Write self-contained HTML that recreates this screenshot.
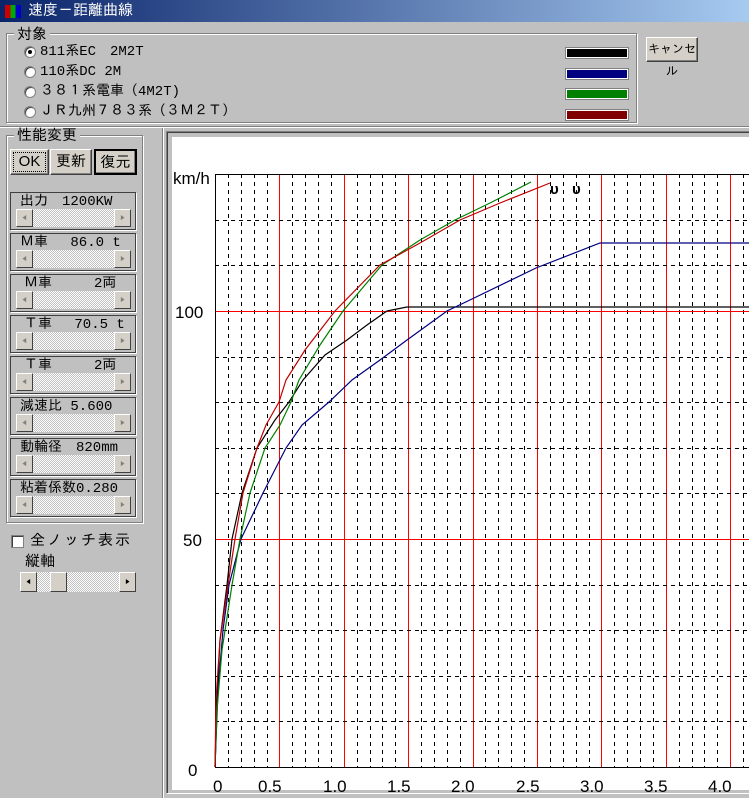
<!DOCTYPE html>
<html><head><meta charset="utf-8"><style>
*{margin:0;padding:0;box-sizing:border-box}
body{width:749px;height:798px;background:#c0c0c0;position:relative;overflow:hidden;font-family:"Liberation Sans","IPAGothic","Noto Sans CJK JP",sans-serif;font-size:13px;color:#000}
.a{position:absolute}
.title{left:0;top:0;width:749px;height:22px;background:linear-gradient(90deg,#0a246a,#a6caf0);color:#fff;font-size:15px;line-height:22px;padding-left:28px}
.grp{border:1px solid #808080;box-shadow:1px 1px 0 #fff inset,1px 1px 0 #fff}
.gl{background:#c0c0c0;padding:0 3px;font-size:15px;line-height:15px}
.btn{background:#d4d0c8;border:1px solid;border-color:#fff #404040 #404040 #fff;box-shadow:inset -1px -1px 0 #808080;text-align:center;font-size:15px}
.sw{width:62px;height:10px;border:1px solid #fff;outline:1px solid #808080}
.rad{width:12px;height:12px;border-radius:50%;background:#fff;border:1px solid #808080;box-shadow:inset 1px 1px 0 #404040}
.rt{font-size:14px;font-family:"Liberation Mono","IPAGothic",monospace}
.sb{width:115px;height:18px;background:repeating-conic-gradient(#fff 0 25%,#c0c0c0 0 50%) 0 0/2px 2px}
.sb .ar{position:absolute;top:0;width:17px;height:18px;background:#d4d0c8;border:1px solid;border-color:#fff #404040 #404040 #fff;color:#808080;font-size:9px;line-height:16px;text-align:center}
.box{border:1px solid #404040;box-shadow:1px 1px 0 #fff}
</style></head><body>
<div class="a title">速度－距離曲線</div>
<div class="a" style="left:5px;top:5px;width:16px;height:13px;background:linear-gradient(90deg,#c00 0 33%,#0a0 33% 66%,#00c 66%)"></div>

<div class="a grp" style="left:6px;top:33px;width:631px;height:90px"></div>
<div class="a gl" style="left:14px;top:27px">対象</div>
<div class="a rad" style="left:24px;top:46px"></div><div class="a" style="left:28px;top:50px;width:4px;height:4px;background:#000;border-radius:50%"></div>
<div class="a rt" style="left:40px;top:43px">811系EC　2M2T</div>
<div class="a rad" style="left:24px;top:66px"></div><div class="a rt" style="left:40px;top:63px">110系DC 2M</div>
<div class="a rad" style="left:24px;top:86px"></div><div class="a rt" style="left:40px;top:83px">３８１系電車（4M2T)</div>
<div class="a rad" style="left:24px;top:106px"></div><div class="a rt" style="left:40px;top:103px">ＪＲ九州７８３系（３Ｍ２Ｔ）</div>
<div class="a sw" style="left:566px;top:48px;background:#000"></div>
<div class="a sw" style="left:566px;top:69px;background:#000080"></div>
<div class="a sw" style="left:566px;top:89px;background:#008000"></div>
<div class="a sw" style="left:566px;top:110px;background:#800000"></div>
<div class="a btn" style="left:646px;top:37px;width:52px;height:25px;font-size:12px;line-height:22px">キャンセル</div>
<div class="a" style="left:0;top:126px;width:749px;height:2px;border-top:1px solid #808080;border-bottom:1px solid #fff"></div>

<div class="a grp" style="left:6px;top:135px;width:137px;height:388px"></div>
<div class="a gl" style="left:14px;top:128px">性能変更</div>
<div class="a btn" style="left:10px;top:149px;width:39px;height:26px;line-height:24px;outline:1px dotted #000;outline-offset:-4px">OK</div>
<div class="a btn" style="left:50px;top:149px;width:42px;height:26px;line-height:24px">更新</div>
<div class="a btn" style="left:94px;top:149px;width:43px;height:26px;line-height:24px;border:2px solid #000">復元</div>

<div id="sl"></div>

<div class="a" style="left:11px;top:535px;width:13px;height:13px;background:#fff;border:1px solid #808080;box-shadow:inset 1px 1px 0 #404040"></div>
<div class="a" style="left:30px;top:532px;font-size:15px;letter-spacing:2px">全ノッチ表示</div>
<div class="a" style="left:25px;top:553px;font-size:15px">縦軸</div>
<div class="a sb" style="left:20px;top:572px;width:116px;height:20px">
<div class="ar" style="left:0;height:20px;color:#000;line-height:18px">◀</div>
<div class="ar" style="left:30px;height:20px"></div>
<div class="ar" style="right:0;height:20px;color:#000;line-height:18px">▶</div></div>

<div class="a" style="left:162px;top:128px;width:2px;height:670px;border-left:1px solid #808080;border-right:1px solid #fff"></div>
<div class="a" style="left:166px;top:131px;width:590px;height:663px;border:1px solid;border-color:#808080 #fff #fff #808080;box-shadow:inset 1px 1px 0 #404040"></div>
<div class="a" style="left:172px;top:137px;width:580px;height:653px;background:#fff"></div>

<svg class="a" style="left:0;top:0" width="749" height="798" id="ch">
<g id="grid"></g>
<g fill="none" stroke-width="1.2">
<polyline stroke="#000" points="215,767 217,700 220,640 227,585 232,539 242,493 257,448 275,420 289,402 303,380 325,355 347,340 367,325 387,311 407,307 749,307"/>
<polyline stroke="#000080" points="215,767 218,690 223,630 229,585 241,539 263,493 286,448 302,425 329,402 352,380 380,360 407,340 447,311 472,299 536,268 600,243 749,243"/>
<polyline stroke="#008000" points="215,767 217,710 222,650 232,585 240,539 250,493 265,448 280,425 291,402 299,380 320,345 343,311 382,265 420,240 455,220 490,203 531,182"/>
<polyline stroke="#c00000" points="215,767 216,700 220,640 228,585 235,539 243,493 257,448 266,425 279,402 286,380 305,350 335,311 380,265 420,243 460,220 500,203 550,183"/>
</g>
<g font-family="Liberation Sans,sans-serif" font-size="17" fill="#000">
<text x="173" y="184">km/h</text>
<text x="175" y="318">100</text>
<text x="183" y="546">50</text>
<text x="188" y="776">0</text>
<text x="213" y="792">0</text>
<text x="258" y="792">0.5</text>
<text x="323" y="792">1.0</text>
<text x="387" y="792">1.5</text>
<text x="451" y="792">2.0</text>
<text x="516" y="792">2.5</text>
<text x="580" y="792">3.0</text>
<text x="644" y="792">3.5</text>
<text x="708" y="792">4.0</text>
<text x="550" y="194" font-weight="bold" font-size="15">υ</text>
<text x="572" y="194" font-weight="bold" font-size="15">υ</text>
</g>
</svg>
<script>
var g=document.getElementById('grid'),s='';
function L(x1,y1,x2,y2,c,d){s+='<line x1="'+x1+'" y1="'+y1+'" x2="'+x2+'" y2="'+y2+'" stroke="'+c+'" stroke-width="1" '+(d?'stroke-dasharray="4,4"':'')+'/>';}
for(var k=1;k<=42;k++){var x=Math.round(215+12.88*k)+0.5;if(x>749)break;if(k%5==0)L(x,174,x,767,'#f00',0);else L(x,174,x,767,'#000',1);}
for(var k=1;k<=12;k++){var y=Math.round(767-45.6*k)+0.5;if(k%5==0)L(215,y,749,y,'#f00',0);else L(215,y,749,y,'#000',1);}
L(215,174.5,749,174.5,'#000',0);L(215,767.5,749,767.5,'#000',0);L(215.5,174,215.5,768,'#000',0);
g.innerHTML=s;
var labs=['出力　1200KW','Ｍ車　 86.0 t','Ｍ車　　　2両','Ｔ車　 70.5 t','Ｔ車　　　2両','減速比 5.600','動輪径　820mm','粘着係数0.280'];
var tops=[192,233,274,315,356,397,438,479],h='';
for(var i=0;i<8;i++){var t=tops[i];
h+='<div class="a box" style="left:10px;top:'+t+'px;width:126px;height:38px"></div>';
h+='<div class="a rt" style="left:'+(i==2||i==3||i==4?24:20)+'px;top:'+(t+1)+'px;font-size:14px">'+labs[i]+'</div>';
h+='<div class="a sb" style="left:16px;top:'+(t+17)+'px"><div class="ar" style="left:0">◀</div><div class="ar" style="right:0">▶</div></div>';}
document.getElementById('sl').innerHTML=h;
</script>
</body></html>
